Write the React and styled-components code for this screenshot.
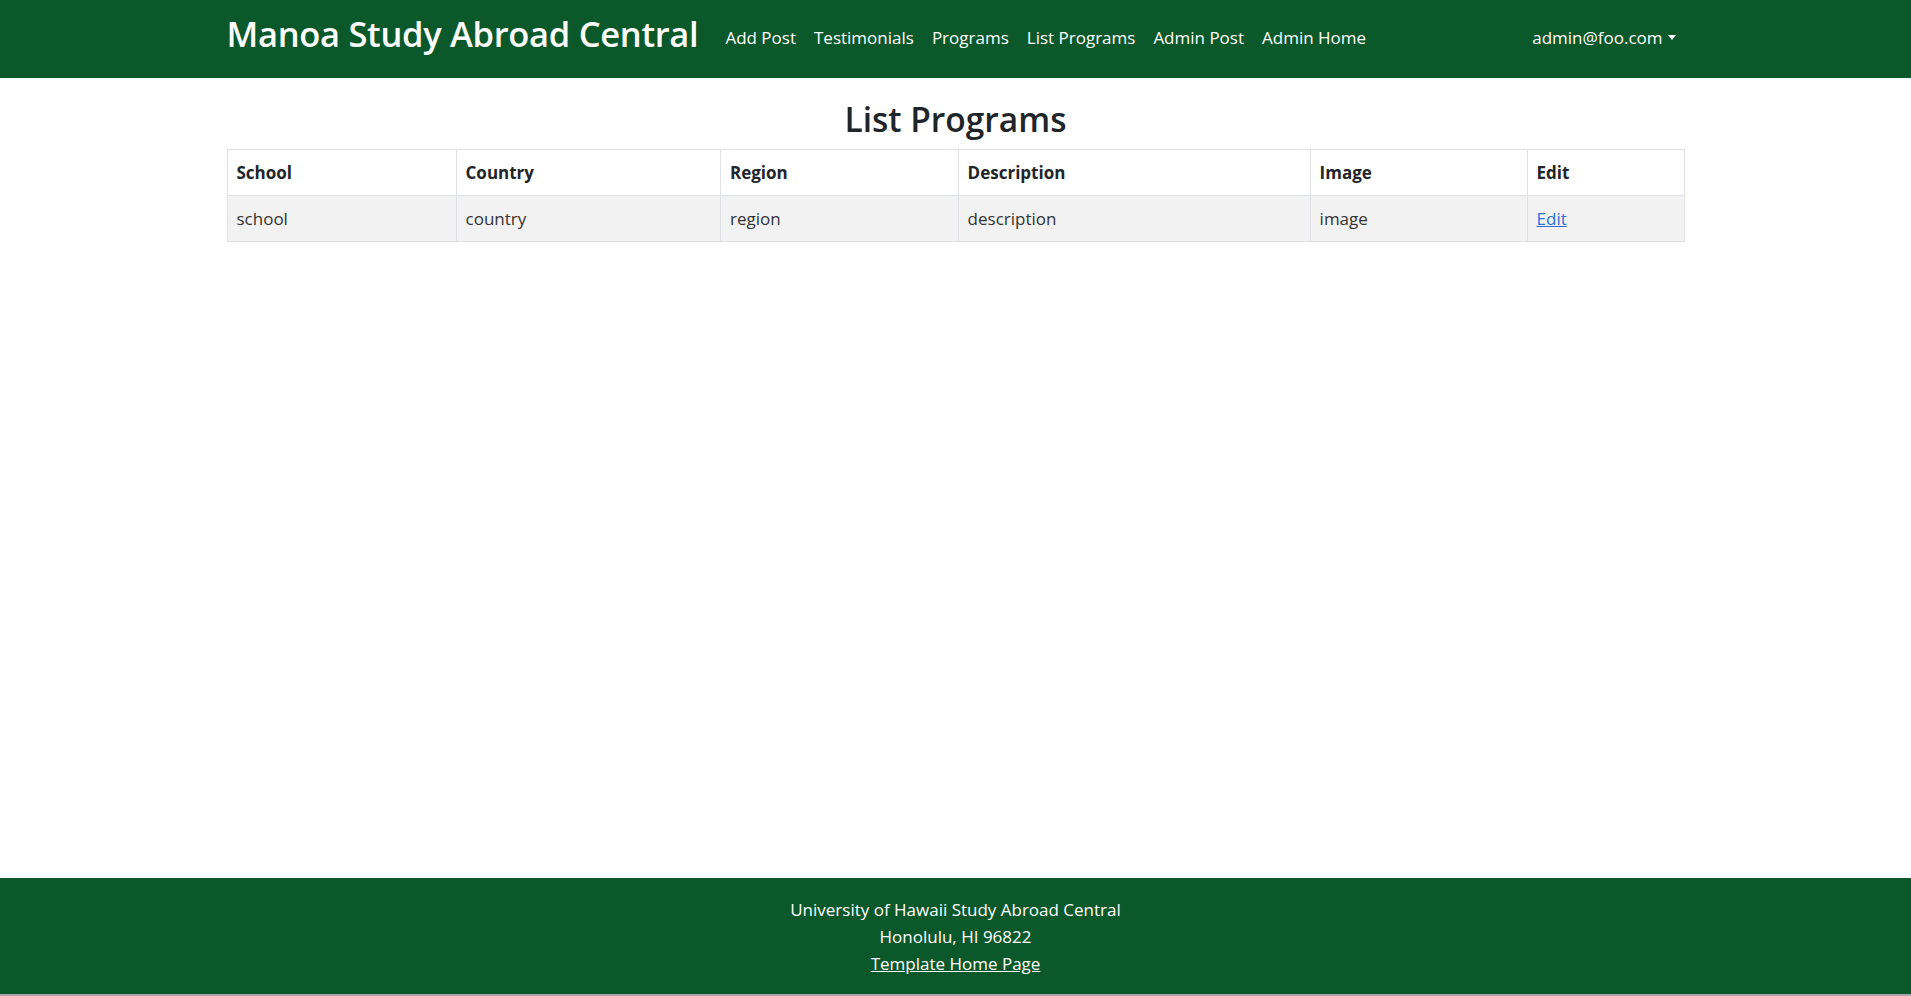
import React from "react";
import styled, { createGlobalStyle } from "styled-components";

const GlobalStyle = createGlobalStyle`
	body {
		margin: 0;
		background: #a8a8a8;
		font-family: "Open Sans", "Noto Sans", sans-serif;
		color: #212529;
	}
`;

const columns = [
	{ key: "school", label: "School", width: 15.72 },
	{ key: "country", label: "Country", width: 18.15 },
	{ key: "region", label: "Region", width: 16.31 },
	{ key: "description", label: "Description", width: 24.16 },
	{ key: "image", label: "Image", width: 14.89 },
	{ key: "edit", label: "Edit", width: 10.77 },
];

const programs = [
	{
		school: "school",
		country: "country",
		region: "region",
		description: "description",
		image: "image",
	},
];

export default function App() {
	return (
		<>
			<GlobalStyle />
			<Page>
				<Navbar>
					<Container>
						<Brand href="#">Manoa Study Abroad Central</Brand>
						<NavList>
							<NavLink href="#">Add Post</NavLink>
							<NavLink href="#">Testimonials</NavLink>
							<NavLink href="#">Programs</NavLink>
							<NavLink href="#">List Programs</NavLink>
							<NavLink href="#">Admin Post</NavLink>
							<NavLink href="#">Admin Home</NavLink>
						</NavList>
						<UserMenu href="#">admin@foo.com</UserMenu>
					</Container>
				</Navbar>

				<Main>
					<Title>List Programs</Title>
					<Table>
						<colgroup>
							{columns.map((col) => (
								<Col key={col.key} $w={col.width} />
							))}
						</colgroup>
						<thead>
							<tr>
								{columns.map((col) => (
									<Th key={col.key}>{col.label}</Th>
								))}
							</tr>
						</thead>
						<tbody>
							{programs.map((program, index) => (
								<Row key={index} $striped={index % 2 === 0}>
									<Td>{program.school}</Td>
									<Td>{program.country}</Td>
									<Td>{program.region}</Td>
									<Td>{program.description}</Td>
									<Td>{program.image}</Td>
									<Td>
										<EditLink href="#">Edit</EditLink>
									</Td>
								</Row>
							))}
						</tbody>
					</Table>
				</Main>

				<Footer>
					<div>University of Hawaii Study Abroad Central</div>
					<div>Honolulu, HI 96822</div>
					<FooterLink href="#">Template Home Page</FooterLink>
				</Footer>
			</Page>
		</>
	);
}

const Page = styled.div`
	min-height: 994px;
	display: flex;
	flex-direction: column;
	background: #fff;
`;

const Container = styled.div`
	box-sizing: border-box;
	width: 100%;
	max-width: 1485px;
	margin: 0 auto;
	padding: 0 13.5px;
`;

const Navbar = styled.nav`
	height: 78px;
	background: #0b582a;
	display: flex;
	align-items: center;

	${Container} {
		display: flex;
		align-items: center;
	}
`;

const Brand = styled.a`
	padding-bottom: 10px;
	font-size: 34.5px;
	font-weight: 600;
	line-height: 46px;
	color: #fff;
	text-decoration: none;
	margin-right: 18px;
	letter-spacing: -0.3px;
	white-space: nowrap;
`;

const NavList = styled.div`
	display: flex;
	align-items: center;
`;

const NavLink = styled.a`
	padding: 7px 9px 10px;
	font-size: 17px;
	line-height: 27px;
	color: #fff;
	text-decoration: none;
	white-space: nowrap;
`;

const UserMenu = styled(NavLink)`
	margin-left: auto;
	display: flex;
	align-items: center;

	&::after {
		content: "";
		margin-left: 5px;
		border-top: 5px solid #fff;
		border-left: 4.5px solid transparent;
		border-right: 4.5px solid transparent;
	}
`;

const Main = styled(Container)``;

const Title = styled.h2`
	margin: 20px 0 8px;
	text-align: center;
	font-size: 33.5px;
	font-weight: 600;
	line-height: 43px;
	color: #212529;
`;

const Table = styled.table`
	width: 100%;
	table-layout: fixed;
	border-collapse: collapse;
	border: 1px solid #dee2e6;
	font-size: 17px;
	line-height: 27px;
`;

const Col = styled.col`
	width: ${(p) => p.$w}%;
`;

const Th = styled.th`
	padding: 9px;
	text-align: left;
	font-weight: 700;
	border: 1px solid #dee2e6;
	background: #fff;
`;

const Row = styled.tr`
	background: ${(p) => (p.$striped ? "#f2f2f2" : "#fff")};
`;

const Td = styled.td`
	padding: 9px;
	border: 1px solid #dee2e6;
	color: #333;
`;

const EditLink = styled.a`
	color: #2f6fd6;
	text-decoration: underline;
`;

const Footer = styled.footer`
	margin-top: auto;
	padding: 18px 0 17.5px;
	background: #0b582a;
	color: #fff;
	text-align: center;
	font-size: 17px;
	line-height: 27px;
`;

const FooterLink = styled.a`
	color: #fff;
	text-decoration: underline;
`;
